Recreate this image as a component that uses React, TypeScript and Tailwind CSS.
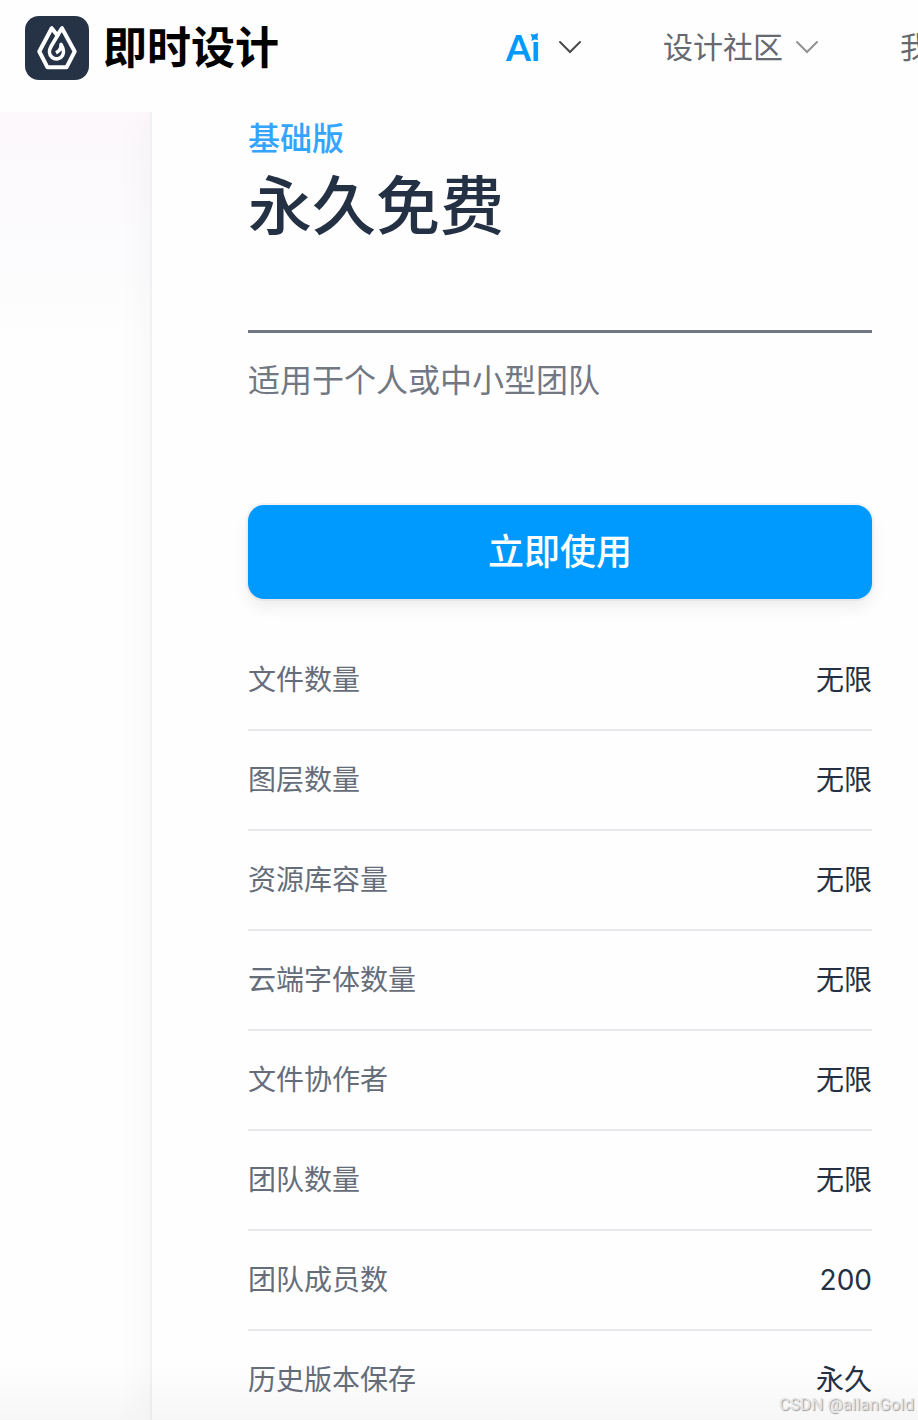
import type { ReactNode } from 'react';

const FEATURES = [
  { label: '文件数量', value: '无限' },
  { label: '图层数量', value: '无限' },
  { label: '资源库容量', value: '无限' },
  { label: '云端字体数量', value: '无限' },
  { label: '文件协作者', value: '无限' },
  { label: '团队数量', value: '无限' },
  { label: '团队成员数', value: '200' },
  { label: '历史版本保存', value: '永久' },
];

function LogoMark() {
  return (
    <svg viewBox="0 0 64 64" className="w-16 h-16 shrink-0" aria-hidden="true">
      <rect width="64" height="64" rx="14" fill="#263347" />
      <g fill="none" stroke="#fff" strokeLinejoin="round">
        <path strokeWidth="4" d="M31.7 18.5 26.7 12.2 14.3 35.5 22.5 51.3H41.5L49.7 35.5 37 12.2 31.7 20.5" />
        <path strokeWidth="3.6" d="M33.5 18 26.3 30C23.6 34.5 24 39 27 41.3C30.5 44 35.5 43 37.6 39.3C39.3 36.2 38.4 32.5 36 28.5C36.4 32 34.8 34.8 31 36.8" />
      </g>
    </svg>
  );
}

function Chevron({ className }: { className: string }) {
  return (
    <svg viewBox="0 0 24 14" className={`w-6 h-[14px] shrink-0 ${className}`} aria-hidden="true">
      <path d="M2 2 12 12 22 2" fill="none" stroke="currentColor" strokeWidth="2" strokeLinecap="round" />
    </svg>
  );
}

function NavItem({ children, chevron }: { children: ReactNode; chevron?: string }) {
  return (
    <button type="button" className="flex items-center gap-3 shrink-0 text-[30px] leading-10 text-[#66696f]">
      {children}
      {chevron && <Chevron className={chevron} />}
    </button>
  );
}

export default function App() {
  return (
    <div className="relative flex flex-col h-screen overflow-hidden bg-[#fdfdfe] font-['Inter','Noto_Sans_CJK_SC',sans-serif]">
      {/* Header */}
      <header className="z-10 flex items-start h-28 shrink-0 pl-[25px] pt-[15px] bg-[#fefefe] overflow-hidden whitespace-nowrap">
        <a href="#" className="flex items-center gap-[14px] shrink-0 text-[44px] leading-[66px] font-bold text-black">
          <LogoMark />
          即时设计
        </a>
        <nav className="flex items-center gap-[81px] h-16 ml-[227px]">
          <NavItem chevron="text-[#4a4a4a]">
            <span className="relative w-10 text-left font-['Lato','Noto_Sans_CJK_SC',sans-serif] text-[36px] font-bold text-[#009aff]">
              Ai
              <svg viewBox="0 0 10 10" className="absolute left-[23px] top-[5px] w-[10px] h-[10px]" aria-hidden="true">
                <rect width="10" height="10" fill="#fefefe" />
                <path d="M1.5 2 5 2.5 9 1 8.5 5 9 8 5.5 7.5 2.5 9 3 5.5Z" fill="#009aff" />
              </svg>
            </span>
          </NavItem>
          <NavItem chevron="text-[#929292]">设计社区</NavItem>
          <NavItem>我的工作台</NavItem>
        </nav>
      </header>

      {/* Pricing card */}
      <main className="flex flex-1 min-h-0 pl-[150px] bg-linear-to-b from-[#fcf8fc] via-[#fcfbfd] via-[10%] to-[#fefefe] to-[18%]">
        <section className="flex-1 h-max pt-[5px] pl-24 pr-[46px] border-l-2 border-[#f1f1f3] bg-[#fefefe] shadow-[0_0_40px_rgba(0,0,0,0.04)]">
          <p className="text-[32px] leading-11 font-medium text-[#33a4ff]">基础版</p>
          <h1 className="text-[64px] leading-[90px] font-medium text-[#243144]">永久免费</h1>
          <hr className="mt-[79px] border-t-3 border-[#717780]" />
          <p className="mt-6 text-[32px] leading-12 text-[#717783]">适用于个人或中小型团队</p>
          <button
            type="button"
            className="w-full h-[94px] mt-[100px] rounded-2xl bg-[#009aff] text-white text-[36px] font-medium shadow-[0_0_0_2px_rgba(0,0,0,0.04),0_8px_16px_rgba(0,0,0,0.07)]"
          >
            立即使用
          </button>
          <table className="w-full mt-8 border-separate border-spacing-0 text-[28px] leading-10">
            <tbody>
              {FEATURES.map((item) => (
                <tr key={item.label} className="group">
                  <th scope="row" className="h-25 p-0 border-b-2 border-[#e7e8ec] group-last:border-transparent text-left font-normal text-[#656d7a]">
                    {item.label}
                  </th>
                  <td className="h-25 p-0 border-b-2 border-[#e7e8ec] group-last:border-transparent text-right text-[#243144]">
                    {item.value}
                  </td>
                </tr>
              ))}
            </tbody>
          </table>
        </section>
      </main>

      {/* Bottom fade and watermark */}
      <div className="absolute inset-x-0 bottom-0 h-14 bg-linear-to-b from-transparent to-black/3 pointer-events-none" />
      <span className="absolute right-1 bottom-1 font-['Roboto',sans-serif] text-[17px] leading-6 text-[#e4e4e4] [text-shadow:1px_1px_1px_#999]">
        CSDN @allanGold
      </span>
    </div>
  );
}
